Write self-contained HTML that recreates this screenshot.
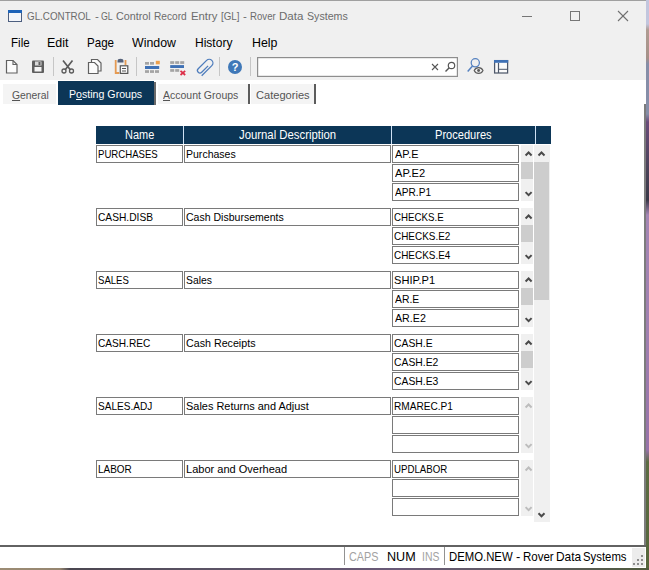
<!DOCTYPE html>
<html lang="en">
<head>
<meta charset="utf-8">
<title>GL.CONTROL - GL Control Record Entry [GL] - Rover Data Systems</title>
<style>
html,body{margin:0;padding:0;}
body{width:649px;height:570px;overflow:hidden;position:relative;background:#fff;font-family:"Liberation Sans",sans-serif;}
.abs,.t,.inp,.sb,.thumb,.hd,.tab,.tsep,.ssep{position:absolute;}
.t{line-height:20px;height:20px;white-space:nowrap;transform-origin:0 0;}
#deskR{left:646px;top:0;width:3px;height:570px;background:linear-gradient(180deg,#c2c6de 0px,#c2c6de 24px,#b09c92 30px,#a59088 58px,#868ea8 64px,#868ea8 114px,#6a4c7a 122px,#4a4258 170px,#3a3848 200px,#a486b4 215px,#a080b0 330px,#9672a8 450px,#5c6c42 462px,#56663c 570px);}
#deskB{left:0;top:567.5px;width:649px;height:2.5px;background:linear-gradient(90deg,#9c8c74 0px,#968670 60px,#4a4650 70px,#5a5264 200px,#6a5a78 400px,#5a5a58 560px,#4e5a3c 649px);}
#chrome{left:0;top:0;width:646px;height:80px;background:#f0f0f0;}
#topline{left:0;top:0;width:646px;height:1px;background:#a0a0a0;}
#rborder{left:646px;top:0;width:1px;height:567px;background:#7e8296;}
#cborder{left:644px;top:104px;width:2px;height:441px;background:#7c7c7c;}
.tab{top:84px;height:20px;background:#f4f4f4;}
.tsep{top:84px;width:2px;height:20px;background:#5c5c5c;}
#tabact{left:58px;top:81px;width:96px;height:24px;background:#0c3657;}
.hd{top:126px;height:18px;background:#0c3657;}
.inp{height:16px;border:1px solid #7a7a7a;background:#fff;}
.sb{width:12px;background:#f0f0f0;}
.thumb{background:#cdcdcd;}
.ssep{top:547px;width:1px;height:18px;background:#929292;}
</style>
</head>
<body>
<div id="chrome" class="abs"></div>
<div id="topline" class="abs"></div>
<div id="rborder" class="abs"></div>
<div id="deskR" class="abs"></div>
<div id="deskB" class="abs"></div>
<div id="cborder" class="abs"></div>

<!-- title bar icon + window buttons -->
<svg class="abs" style="left:8px;top:10px" width="15" height="13" viewBox="0 0 15 13">
  <rect x="0.5" y="0.5" width="13" height="11" fill="#f4f6fa" stroke="#4d5f80"/>
  <rect x="0" y="0" width="14" height="3" fill="#1e63b8"/>
</svg>
<svg class="abs" style="left:390px;top:0" width="255" height="32" viewBox="0 0 255 32">
  <g stroke="#767676" stroke-width="1" fill="none" shape-rendering="crispEdges">
    <line x1="132" y1="16.5" x2="142" y2="16.5"/>
    <rect x="180.5" y="11.5" width="9" height="9"/>
  </g>
  <g stroke="#707070" stroke-width="1.1" fill="none">
    <line x1="228" y1="11" x2="238" y2="21"/>
    <line x1="238" y1="11" x2="228" y2="21"/>
  </g>
</svg>

<!-- toolbar -->
<svg class="abs" style="left:0;top:54px" width="645" height="26" viewBox="0 0 645 26">
  <!-- new doc -->
  <path d="M6.500 6.500h6.500l4 4v8.500h-10.500z" fill="#fbfbfb" stroke="#606060" stroke-width="1.200"/>
  <path d="M13 6.500v4h4" fill="none" stroke="#606060" stroke-width="1.100"/>
  <!-- save -->
  <rect x="32" y="6.500" width="12" height="12.500" rx="1" fill="#5e5e5e"/>
  <rect x="35" y="7.500" width="6.500" height="4" fill="#d8d8d8"/>
  <rect x="38.500" y="8" width="2" height="3" fill="#5e5e5e"/>
  <rect x="34.500" y="13" width="7" height="4.500" fill="#f4f4f4"/>
  <rect x="53" y="3" width="1" height="19" fill="#c6c6c6"/>
  <!-- cut -->
  <g stroke="#5a5a5a" fill="none">
    <path d="M63 6.500l7.500 9.500M72.500 6.500l-7.500 9.500" stroke-width="1.700"/>
    <circle cx="64" cy="17" r="2" stroke-width="1.300"/>
    <circle cx="71.500" cy="17" r="2" stroke-width="1.300"/>
  </g>
  <!-- copy -->
  <g stroke="#606060" stroke-width="1.200" fill="#fbfbfb">
    <path d="M91.500 5.500h6l3.500 3.500v8h-9.500z"/>
    <path d="M88.500 8.500h6l3.500 3.500v7.500h-9.500z"/>
  </g>
  <!-- paste -->
  <g>
    <path d="M115.700 6v13h3.500" fill="none" stroke="#e59a52" stroke-width="1.800"/>
    <path d="M125.500 6v5" fill="none" stroke="#e59a52" stroke-width="1.800"/>
    <path d="M117.500 8.500v-1.500a3 2.200 0 0 1 6 0v1.500z" fill="#56627a"/>
    <rect x="120.300" y="11.800" width="7.500" height="7.600" fill="#fbfbfb" stroke="#555" stroke-width="1.200"/>
    <path d="M122 14.500h4M122 17h4" stroke="#555" stroke-width="1"/>
  </g>
  <rect x="136" y="3" width="1" height="19" fill="#c6c6c6"/>
  <!-- insert row -->
  <g>
    <rect x="145" y="8" width="4" height="2.700" fill="#a4a4a4"/><rect x="150" y="8" width="4" height="2.700" fill="#a4a4a4"/><rect x="155.800" y="6.800" width="4" height="3.500" fill="#eda04c"/>
    <rect x="145" y="12" width="14.200" height="3" fill="#3f71b5"/>
    <rect x="145" y="16.200" width="4" height="2.700" fill="#a4a4a4"/><rect x="150" y="16.200" width="4" height="2.700" fill="#a4a4a4"/><rect x="155" y="16.200" width="4" height="2.700" fill="#a4a4a4"/>
  </g>
  <!-- delete row -->
  <g>
    <rect x="170.200" y="7.200" width="4" height="2.700" fill="#a4a4a4"/><rect x="175.200" y="7.200" width="4" height="2.700" fill="#a4a4a4"/><rect x="180.200" y="7.200" width="4" height="2.700" fill="#a4a4a4"/>
    <rect x="170.200" y="11.100" width="13.800" height="2.900" fill="#3f71b5"/>
    <rect x="170.200" y="15.100" width="4" height="2.700" fill="#a4a4a4"/><rect x="175.200" y="15.100" width="4" height="2.700" fill="#a4a4a4"/>
    <path d="M180.500 16.800l4.700 4.200M185.200 16.800l-4.700 4.200" stroke="#dc2e48" stroke-width="1.700"/>
  </g>
  <!-- attach -->
  <g transform="translate(204.300 13.600) rotate(45) scale(1.120)">
    <path d="M1.300-3.500V4.600A2.200 2.200 0 0 1-3.100 4.600V-6A3.300 3.300 0 0 1 3.500-6V6.800" fill="none" stroke="#4d7cbc" stroke-width="1.150"/>
  </g>
  <rect x="219" y="3" width="1" height="19" fill="#c6c6c6"/>
  <!-- help -->
  <circle cx="235" cy="13" r="7" fill="#3f78b8"/>
  <text x="235" y="17" font-size="11" font-weight="bold" fill="#fff" text-anchor="middle" font-family="Liberation Sans, sans-serif">?</text>
  <rect x="250" y="3" width="1" height="19" fill="#c6c6c6"/>
  <!-- search box -->
  <rect x="257.600" y="3.600" width="199.800" height="18.800" fill="#fff" stroke="#8e8e8e" stroke-width="1.200"/>
  <path d="M432 10l6 6M438 10l-6 6" stroke="#555" stroke-width="1.100"/>
  <circle cx="451.500" cy="11.500" r="3.200" fill="none" stroke="#555" stroke-width="1.200"/>
  <line x1="449" y1="14" x2="445.500" y2="17.500" stroke="#555" stroke-width="1.400"/>
  <!-- find -->
  <circle cx="475.300" cy="8.800" r="4.100" fill="none" stroke="#5682c0" stroke-width="1.250"/>
  <line x1="472.500" y1="12" x2="467.700" y2="17.500" stroke="#5682c0" stroke-width="1.500"/>
  <path d="M474.200 16.500C476 12.600 481.200 12.600 483 16.500C481.200 20.400 476 20.400 474.200 16.500z" fill="#f0f0f0" stroke="#5c5c5c" stroke-width="1.150"/>
  <circle cx="478.600" cy="16.500" r="1.450" fill="#5c5c5c"/>
  <!-- layout -->
  <rect x="494.600" y="6.600" width="13" height="12.400" fill="#fbfbfb" stroke="#4e586a" stroke-width="1.250"/>
  <rect x="494" y="6" width="14.200" height="2.800" fill="#3f71b5"/>
  <line x1="498.500" y1="9" x2="498.500" y2="19" stroke="#4e586a" stroke-width="1.200"/>
  <line x1="498.500" y1="15.300" x2="508" y2="15.300" stroke="#4e586a" stroke-width="1"/>
</svg>

<!-- tabs -->
<div class="tab" style="left:3px;width:53px"></div>
<div id="tabact" class="abs"></div>
<div class="abs" style="left:154px;top:82px;width:2px;height:23px;background:#6a6a6a"></div>
<div class="tab" style="left:158px;width:90px"></div>
<div class="tsep" style="left:248px"></div>
<div class="tab" style="left:251px;width:63px"></div>
<div class="tsep" style="left:314px"></div>

<!-- grid header -->
<div class="abs" style="left:96px;top:126px;width:455px;height:18px;background:#cfe1f4"></div>
<div class="hd" style="left:96px;width:87px"></div>
<div class="hd" style="left:184px;width:207px"></div>
<div class="hd" style="left:392px;width:143px"></div>
<div class="hd" style="left:536px;width:15px"></div>

<div class="inp" style="left:96px;top:145px;width:85px"></div>
<div class="inp" style="left:184px;top:145px;width:205px"></div>
<div class="inp" style="left:392px;top:145px;width:125px"></div>
<div class="inp" style="left:392px;top:164px;width:125px"></div>
<div class="inp" style="left:392px;top:183px;width:125px"></div>
<div class="sb" style="left:521px;top:145px;height:56px"></div>
<div class="thumb" style="left:521px;top:162px;width:12px;height:17px"></div>
<svg class="abs" style="left:521px;top:145px" width="13" height="56" viewBox="0 0 13 56"><path d="M4.600 10.500L7.600 7.500L10.600 10.500" fill="none" stroke="#4a4a4a" stroke-width="2"/><path d="M4.600 47.100L7.600 50.100L10.600 47.100" fill="none" stroke="#4a4a4a" stroke-width="2"/></svg>
<div class="inp" style="left:96px;top:208px;width:85px"></div>
<div class="inp" style="left:184px;top:208px;width:205px"></div>
<div class="inp" style="left:392px;top:208px;width:125px"></div>
<div class="inp" style="left:392px;top:227px;width:125px"></div>
<div class="inp" style="left:392px;top:246px;width:125px"></div>
<div class="sb" style="left:521px;top:208px;height:56px"></div>
<div class="thumb" style="left:521px;top:225px;width:12px;height:17px"></div>
<svg class="abs" style="left:521px;top:208px" width="13" height="56" viewBox="0 0 13 56"><path d="M4.600 10.500L7.600 7.500L10.600 10.500" fill="none" stroke="#4a4a4a" stroke-width="2"/><path d="M4.600 47.100L7.600 50.100L10.600 47.100" fill="none" stroke="#4a4a4a" stroke-width="2"/></svg>
<div class="inp" style="left:96px;top:271px;width:85px"></div>
<div class="inp" style="left:184px;top:271px;width:205px"></div>
<div class="inp" style="left:392px;top:271px;width:125px"></div>
<div class="inp" style="left:392px;top:290px;width:125px"></div>
<div class="inp" style="left:392px;top:309px;width:125px"></div>
<div class="sb" style="left:521px;top:271px;height:56px"></div>
<div class="thumb" style="left:521px;top:288px;width:12px;height:17px"></div>
<svg class="abs" style="left:521px;top:271px" width="13" height="56" viewBox="0 0 13 56"><path d="M4.600 10.500L7.600 7.500L10.600 10.500" fill="none" stroke="#4a4a4a" stroke-width="2"/><path d="M4.600 47.100L7.600 50.100L10.600 47.100" fill="none" stroke="#4a4a4a" stroke-width="2"/></svg>
<div class="inp" style="left:96px;top:334px;width:85px"></div>
<div class="inp" style="left:184px;top:334px;width:205px"></div>
<div class="inp" style="left:392px;top:334px;width:125px"></div>
<div class="inp" style="left:392px;top:353px;width:125px"></div>
<div class="inp" style="left:392px;top:372px;width:125px"></div>
<div class="sb" style="left:521px;top:334px;height:56px"></div>
<div class="thumb" style="left:521px;top:351px;width:12px;height:17px"></div>
<svg class="abs" style="left:521px;top:334px" width="13" height="56" viewBox="0 0 13 56"><path d="M4.600 10.500L7.600 7.500L10.600 10.500" fill="none" stroke="#4a4a4a" stroke-width="2"/><path d="M4.600 47.100L7.600 50.100L10.600 47.100" fill="none" stroke="#4a4a4a" stroke-width="2"/></svg>
<div class="inp" style="left:96px;top:397px;width:85px"></div>
<div class="inp" style="left:184px;top:397px;width:205px"></div>
<div class="inp" style="left:392px;top:397px;width:125px"></div>
<div class="inp" style="left:392px;top:416px;width:125px"></div>
<div class="inp" style="left:392px;top:435px;width:125px"></div>
<div class="sb" style="left:521px;top:397px;height:56px"></div>
<svg class="abs" style="left:521px;top:397px" width="13" height="56" viewBox="0 0 13 56"><path d="M4.600 10.500L7.600 7.500L10.600 10.500" fill="none" stroke="#bdbdbd" stroke-width="2"/><path d="M4.600 47.100L7.600 50.100L10.600 47.100" fill="none" stroke="#bdbdbd" stroke-width="2"/></svg>
<div class="inp" style="left:96px;top:460px;width:85px"></div>
<div class="inp" style="left:184px;top:460px;width:205px"></div>
<div class="inp" style="left:392px;top:460px;width:125px"></div>
<div class="inp" style="left:392px;top:479px;width:125px"></div>
<div class="inp" style="left:392px;top:498px;width:125px"></div>
<div class="sb" style="left:521px;top:460px;height:56px"></div>
<svg class="abs" style="left:521px;top:460px" width="13" height="56" viewBox="0 0 13 56"><path d="M4.600 10.500L7.600 7.500L10.600 10.500" fill="none" stroke="#bdbdbd" stroke-width="2"/><path d="M4.600 47.100L7.600 50.100L10.600 47.100" fill="none" stroke="#bdbdbd" stroke-width="2"/></svg>

<!-- outer scrollbar -->
<div class="sb" style="left:534px;top:145px;width:16px;height:377px"></div>
<div class="thumb" style="left:534px;top:162px;width:15px;height:138px"></div>
<svg class="abs" style="left:534px;top:145px" width="16" height="377" viewBox="0 0 16 377">
  <path d="M4.500 10.500L7.500 7.500L10.500 10.500" fill="none" stroke="#4a4a4a" stroke-width="2"/>
  <path d="M4.500 368.300L7.500 371.300L10.500 368.300" fill="none" stroke="#4a4a4a" stroke-width="2"/>
</svg>

<!-- status bar -->
<div class="abs" style="left:0;top:545px;width:646px;height:2px;background:#626262"></div>
<div class="ssep" style="left:344px"></div>
<div class="ssep" style="left:444px"></div>
<div class="abs" style="left:632px;top:548px;width:13px;height:19px;background:#ececec"></div>
<svg class="abs" style="left:632px;top:554px" width="13" height="13" viewBox="0 0 13 13" shape-rendering="crispEdges">
  <g fill="#8e8e8e"><rect x="9" y="1" width="2" height="2"/><rect x="5" y="5" width="2" height="2"/><rect x="9" y="5" width="2" height="2"/><rect x="1" y="9" width="2" height="2"/><rect x="5" y="9" width="2" height="2"/><rect x="9" y="9" width="2" height="2"/></g>
</svg>

<!-- all text -->
<div class="t" style="left:26.85px;top:6.02px;font-size:11.5px;color:#6c6c6c;transform:scaleX(0.8534);">GL.CONTROL</div>
<div class="t" style="left:94.90px;top:6.02px;font-size:11.5px;color:#6c6c6c;transform:scaleX(1.0000);">-</div>
<div class="t" style="left:101.44px;top:6.02px;font-size:11.5px;color:#6c6c6c;transform:scaleX(0.7643);">GL</div>
<div class="t" style="left:116.17px;top:6.02px;font-size:11.5px;color:#6c6c6c;transform:scaleX(0.9333);">Control</div>
<div class="t" style="left:154.42px;top:6.02px;font-size:11.5px;color:#6c6c6c;transform:scaleX(0.8833);">Record</div>
<div class="t" style="left:190.62px;top:6.02px;font-size:11.5px;color:#6c6c6c;transform:scaleX(0.9846);">Entry</div>
<div class="t" style="left:221.35px;top:6.02px;font-size:11.5px;color:#6c6c6c;transform:scaleX(0.8500);">[GL]</div>
<div class="t" style="left:242.90px;top:6.02px;font-size:11.5px;color:#6c6c6c;transform:scaleX(1.0000);">-</div>
<div class="t" style="left:249.66px;top:6.02px;font-size:11.5px;color:#6c6c6c;transform:scaleX(0.8379);">Rover</div>
<div class="t" style="left:278.80px;top:6.02px;font-size:11.5px;color:#6c6c6c;transform:scaleX(1.0043);">Data</div>
<div class="t" style="left:307.17px;top:6.02px;font-size:11.5px;color:#6c6c6c;transform:scaleX(0.9256);">Systems</div>
<div class="t" style="left:10.71px;top:32.50px;font-size:13px;color:#000;transform:scaleX(0.8900);">File</div>
<div class="t" style="left:47.14px;top:32.50px;font-size:13px;color:#000;transform:scaleX(0.9571);">Edit</div>
<div class="t" style="left:86.51px;top:32.50px;font-size:13px;color:#000;transform:scaleX(0.8897);">Page</div>
<div class="t" style="left:132.20px;top:32.50px;font-size:13px;color:#000;transform:scaleX(0.9500);">Window</div>
<div class="t" style="left:194.57px;top:32.50px;font-size:13px;color:#000;transform:scaleX(0.9250);">History</div>
<div class="t" style="left:251.85px;top:32.50px;font-size:13px;color:#000;transform:scaleX(0.9520);">Help</div>
<div class="t" style="left:11.80px;top:85.02px;font-size:11.5px;color:#555;transform:scaleX(0.9000);"><u>G</u>eneral</div>
<div class="t" style="left:68.88px;top:84.02px;font-size:11.5px;color:#fff;transform:scaleX(0.9231);">P<u>o</u>sting Groups</div>
<div class="t" style="left:163.10px;top:85.02px;font-size:11.5px;color:#555;transform:scaleX(0.9134);"><u>A</u>ccount Groups</div>
<div class="t" style="left:255.54px;top:85.02px;font-size:11.5px;color:#555;transform:scaleX(0.9648);">Categories</div>
<div class="t" style="left:124.79px;top:124.84px;font-size:12px;color:#fff;transform:scaleX(0.9129);">Name</div>
<div class="t" style="left:239.40px;top:124.84px;font-size:12px;color:#fff;transform:scaleX(0.9451);">Journal Description</div>
<div class="t" style="left:434.58px;top:124.84px;font-size:12px;color:#fff;transform:scaleX(0.9233);">Procedures</div>
<div class="t" style="left:348.97px;top:546.50px;font-size:13px;color:#a2a2a2;transform:scaleX(0.8324);">CAPS</div>
<div class="t" style="left:386.53px;top:546.50px;font-size:13px;color:#000;transform:scaleX(0.9679);">NUM</div>
<div class="t" style="left:422.20px;top:546.50px;font-size:13px;color:#a2a2a2;transform:scaleX(0.8000);">INS</div>
<div class="t" style="left:448.73px;top:546.50px;font-size:13px;color:#000;transform:scaleX(0.8722);">DEMO.NEW</div>
<div class="t" style="left:516.10px;top:546.50px;font-size:13px;color:#000;transform:scaleX(1.0000);">-</div>
<div class="t" style="left:522.61px;top:546.50px;font-size:13px;color:#000;transform:scaleX(0.8853);">Rover</div>
<div class="t" style="left:555.89px;top:546.50px;font-size:13px;color:#000;transform:scaleX(0.9148);">Data</div>
<div class="t" style="left:583.03px;top:546.50px;font-size:13px;color:#000;transform:scaleX(0.8729);">Systems</div>
<div class="t" style="left:97.73px;top:144.19px;font-size:11px;color:#000;transform:scaleX(0.8731);">PURCHASES</div>
<div class="t" style="left:185.54px;top:144.19px;font-size:11px;color:#000;transform:scaleX(0.9569);">Purchases</div>
<div class="t" style="left:394.70px;top:144.19px;font-size:11px;color:#000;transform:scaleX(0.9913);">AP.E</div>
<div class="t" style="left:394.70px;top:163.19px;font-size:11px;color:#000;transform:scaleX(1.0103);">AP.E2</div>
<div class="t" style="left:394.70px;top:182.19px;font-size:11px;color:#000;transform:scaleX(0.9205);">APR.P1</div>
<div class="t" style="left:97.67px;top:207.19px;font-size:11px;color:#000;transform:scaleX(0.9276);">CASH.DISB</div>
<div class="t" style="left:185.54px;top:207.19px;font-size:11px;color:#000;transform:scaleX(0.9574);">Cash Disbursements</div>
<div class="t" style="left:393.82px;top:207.19px;font-size:11px;color:#000;transform:scaleX(0.8836);">CHECKS.E</div>
<div class="t" style="left:393.80px;top:226.19px;font-size:11px;color:#000;transform:scaleX(0.9033);">CHECKS.E2</div>
<div class="t" style="left:393.80px;top:245.19px;font-size:11px;color:#000;transform:scaleX(0.9033);">CHECKS.E4</div>
<div class="t" style="left:97.73px;top:270.19px;font-size:11px;color:#000;transform:scaleX(0.8706);">SALES</div>
<div class="t" style="left:185.56px;top:270.19px;font-size:11px;color:#000;transform:scaleX(0.9423);">Sales</div>
<div class="t" style="left:393.69px;top:270.19px;font-size:11px;color:#000;transform:scaleX(1.0077);">SHIP.P1</div>
<div class="t" style="left:394.70px;top:289.19px;font-size:11px;color:#000;transform:scaleX(0.9440);">AR.E</div>
<div class="t" style="left:394.70px;top:308.19px;font-size:11px;color:#000;transform:scaleX(0.9710);">AR.E2</div>
<div class="t" style="left:97.68px;top:333.19px;font-size:11px;color:#000;transform:scaleX(0.9200);">CASH.REC</div>
<div class="t" style="left:185.53px;top:333.19px;font-size:11px;color:#000;transform:scaleX(0.9714);">Cash Receipts</div>
<div class="t" style="left:393.76px;top:333.19px;font-size:11px;color:#000;transform:scaleX(0.9410);">CASH.E</div>
<div class="t" style="left:393.76px;top:352.19px;font-size:11px;color:#000;transform:scaleX(0.9413);">CASH.E2</div>
<div class="t" style="left:393.76px;top:371.19px;font-size:11px;color:#000;transform:scaleX(0.9413);">CASH.E3</div>
<div class="t" style="left:97.69px;top:396.19px;font-size:11px;color:#000;transform:scaleX(0.9138);">SALES.ADJ</div>
<div class="t" style="left:185.51px;top:396.19px;font-size:11px;color:#000;transform:scaleX(0.9943);">Sales Returns and Adjust</div>
<div class="t" style="left:393.78px;top:396.19px;font-size:11px;color:#000;transform:scaleX(0.9175);">RMAREC.P1</div>
<div class="t" style="left:97.69px;top:459.19px;font-size:11px;color:#000;transform:scaleX(0.9056);">LABOR</div>
<div class="t" style="left:185.50px;top:459.19px;font-size:11px;color:#000;transform:scaleX(1.0020);">Labor and Overhead</div>
<div class="t" style="left:393.82px;top:459.19px;font-size:11px;color:#000;transform:scaleX(0.8797);">UPDLABOR</div>
</body>
</html>
